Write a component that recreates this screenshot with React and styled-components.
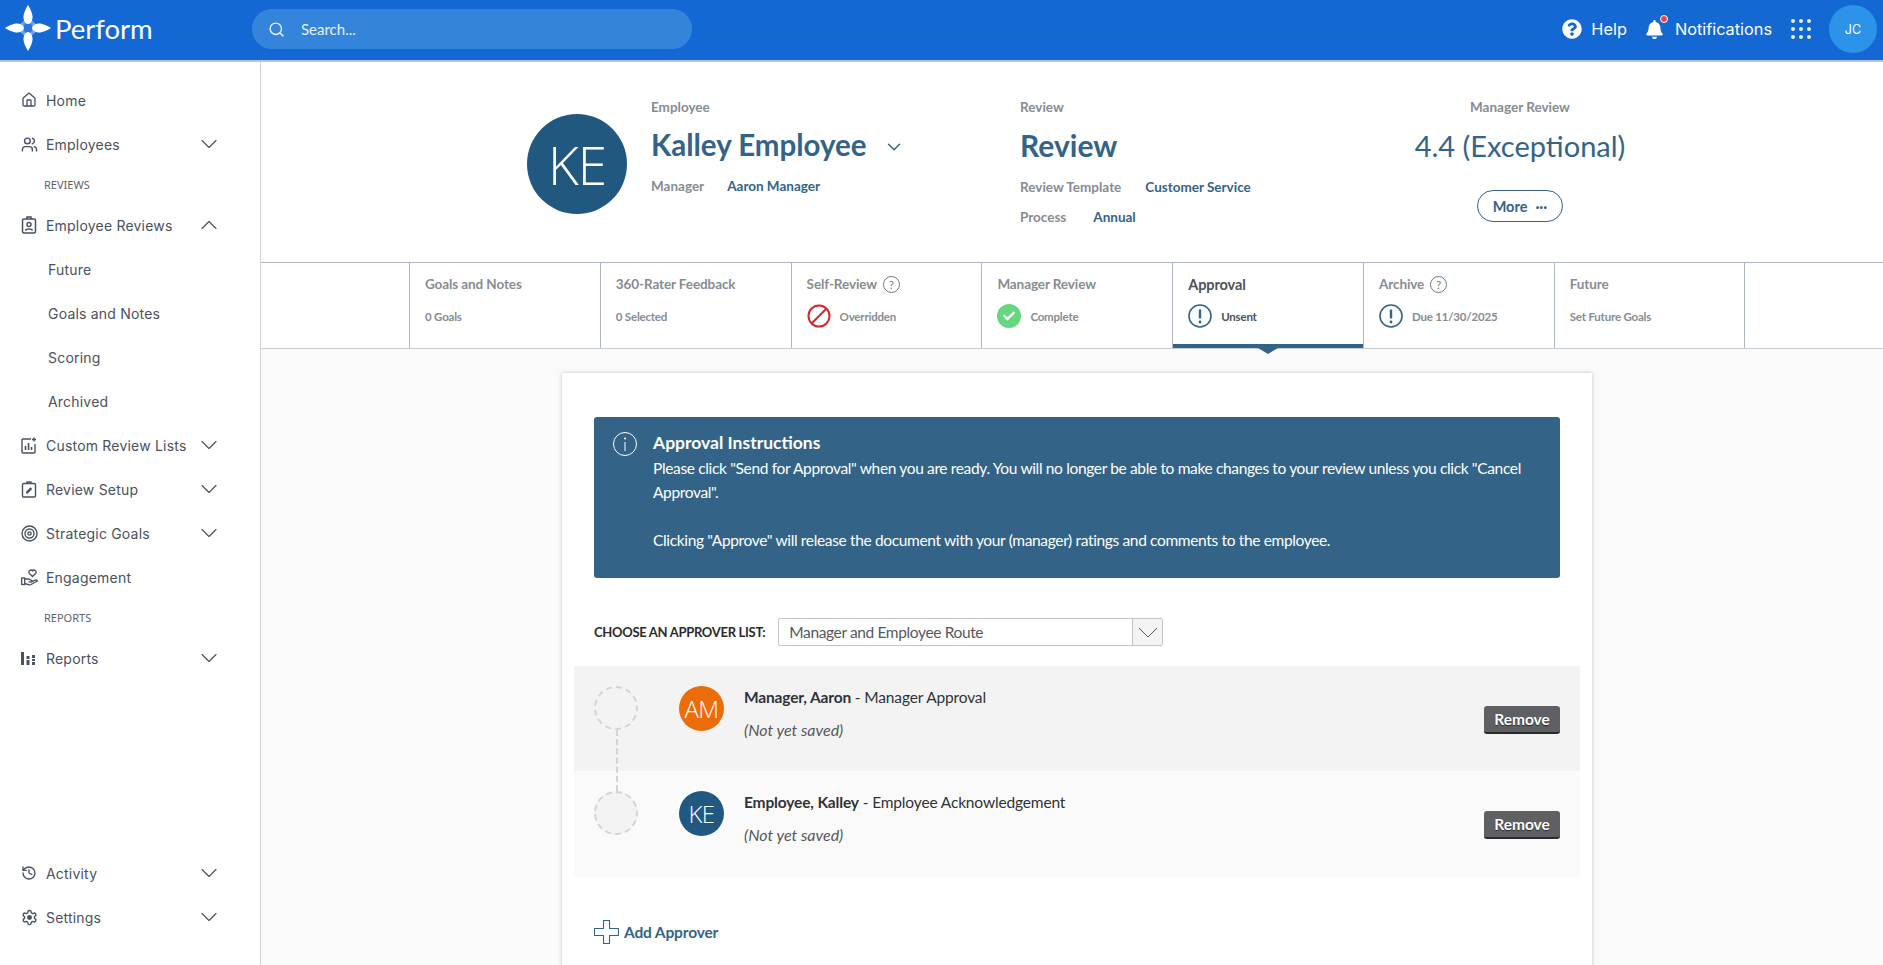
import React from "react";
import styled, { createGlobalStyle } from "styled-components";
import { LuHouse, LuUsers, LuChevronDown, LuChevronUp, LuSearch, LuHistory } from "react-icons/lu";
import { FaQuestionCircle, FaBell, FaCheck } from "react-icons/fa";

const BLUE = "#336488";
const BODY = '"Lato", "Liberation Sans", sans-serif';
const NAV = '"Inter", "Liberation Sans", sans-serif';

const GlobalStyle = createGlobalStyle`
  html, body { margin: 0; padding: 0; height: 100%; overflow: hidden; }
  body { font-family: ${BODY}; background: #fff; }
  #root { height: 100%; }
  * { box-sizing: border-box; }
`;

const Page = styled.div`
  height: 965px;
  display: flex;
  flex-direction: column;
  overflow: hidden;
`;

/* top bar */
const TopBar = styled.header`
  flex: 0 0 62px;
  background: #1368d4;
  border-bottom: 2px solid #b8c4d6;
  display: flex;
  align-items: center;
  padding: 0 6px 2px 5px;
`;

const Brand = styled.div`
  width: 247px;
  display: flex;
  align-items: center;
  gap: 4px;
  color: #fff;
  font-family: "Lato", sans-serif;
  font-size: 27.5px;
  font-weight: 400;
  padding-bottom: 2px;
`;

const SearchBox = styled.div`
  width: 440px;
  height: 40px;
  border-radius: 20px;
  background: #3484dc;
  display: flex;
  align-items: center;
  gap: 16px;
  padding: 0 16px;
  color: #e8f1fb;
  font-size: 15px;
`;

const TopRight = styled.div`
  margin-left: auto;
  display: flex;
  align-items: center;
  color: #fff;
  font-family: ${NAV};
  font-size: 16.3px;
`;

const TopLink = styled.div`
  display: flex;
  align-items: center;
  gap: ${(p) => p.$gap}px;
  margin-right: ${(p) => p.$right}px;
`;

const BellWrap = styled.span`
  position: relative;
  display: flex;
`;

const BellDot = styled.span`
  position: absolute;
  top: -5px;
  right: -4px;
  width: 6px;
  height: 6px;
  border-radius: 50%;
  background: #e8424f;
  border: 1px solid #fff;
  box-sizing: content-box;
`;

const AppsGrid = styled.div`
  display: grid;
  grid-template-columns: repeat(3, 4px);
  gap: 4px;
  margin-right: 18px;
`;

const AppsDot = styled.span`
  width: 4px;
  height: 4px;
  border-radius: 50%;
  background: #e6effa;
`;

const UserBubble = styled.div`
  width: 48px;
  height: 48px;
  border-radius: 50%;
  background: #2b93e8;
  display: flex;
  align-items: center;
  justify-content: center;
  font-size: 12.5px;
`;

const Body = styled.div`
  flex: 1;
  min-height: 0;
  display: flex;
`;

/* sidebar */
const Sidebar = styled.nav`
  flex: 0 0 261px;
  border-right: 1px solid #cfd3d8;
  padding-top: 16px;
  padding-bottom: 26px;
  display: flex;
  flex-direction: column;
`;

const NavRow = styled.div`
  height: 44px;
  display: flex;
  align-items: center;
  padding: 0 37px 0 ${(p) => (p.$sub ? 48 : 21)}px;
  color: #4a5160;
  font-family: ${NAV};
  font-size: 14px;
  letter-spacing: 0.2px;
`;

const NavIcon = styled.span`
  width: 25px;
  display: flex;
  color: #4a5160;
`;

const NavChevron = styled.span`
  margin-left: auto;
  display: flex;
`;

const NavHeading = styled.div`
  height: 37px;
  display: flex;
  align-items: center;
  padding-left: 44px;
  font-size: 11px;
  color: #5b616c;
  font-family: "Noto Sans", sans-serif;
`;

const NavBottom = styled.div`
  margin-top: auto;
`;

/* main column */
const Main = styled.main`
  flex: 1;
  min-width: 0;
  background: #fafafa;
  display: flex;
  flex-direction: column;
`;

const Summary = styled.section`
  flex: 0 0 200px;
  background: #fff;
  display: flex;
  padding: 35px 0 0 266px;
`;

const BigAvatar = styled.div`
  flex: 0 0 100px;
  height: 100px;
  margin: 17px 24px 0 0;
  border-radius: 50%;
  background: #20587f;
  color: #fff;
  display: flex;
  align-items: center;
  justify-content: center;
  font-family: "Open Sans", sans-serif;
  font-weight: 300;
  font-size: 53px;
  letter-spacing: -1px;
`;

const SummaryCol = styled.div`
  width: ${(p) => p.$width}px;
  display: flex;
  flex-direction: column;
  align-items: ${(p) => (p.$center ? "center" : "flex-start")};
`;

const MutedLabel = styled.div`
  height: 20px;
  line-height: 20px;
  color: #868c94;
  font-size: 13.5px;
  font-weight: 700;
`;

const Heading = styled.div`
  display: flex;
  align-items: center;
  gap: 16px;
  height: 54px;
  padding-top: ${(p) => p.$drop || 0}px;
  color: ${BLUE};
  font-size: ${(p) => p.$size}px;
  font-weight: 700;
`;

const HeadingChevron = styled.span`
  display: flex;
  margin-top: 5px;
`;

const KeyRow = styled.div`
  display: flex;
  gap: ${(p) => p.$gap}px;
  height: 30px;
  align-items: center;
  font-size: 13.5px;
  font-weight: 700;
  margin-top: ${(p) => p.$top || 0}px;
`;

const KeyName = styled.span`
  color: #868c94;
`;

const KeyValue = styled.span`
  color: ${BLUE};
`;

const Score = styled.div`
  height: 54px;
  padding-top: 3px;
  display: flex;
  align-items: center;
  color: ${BLUE};
  font-size: 29px;
  white-space: nowrap;
`;

const MoreButton = styled.div`
  width: 86px;
  height: 32px;
  margin-top: 19px;
  border: 1px solid ${BLUE};
  border-radius: 16px;
  color: ${BLUE};
  display: flex;
  align-items: center;
  justify-content: center;
  gap: 8px;
  font-size: 14.5px;
  font-weight: 700;
`;

/* stepper tabs */
const TabBar = styled.div`
  flex: 0 0 87px;
  background: #fff;
  border-top: 1px solid #aeb6bf;
  border-bottom: 1px solid #c9cdd2;
  display: flex;
  padding-left: 148px;
`;

const Tab = styled.div`
  position: relative;
  width: 190.8px;
  border-left: 1px solid #aeb6bf;
  border-right: ${(p) => (p.$last ? "1px solid #aeb6bf" : "none")};
  padding: 10px 0 0 15px;
  ${(p) => p.$active && `box-shadow: inset 0 -4px 0 ${BLUE};`}
`;

const TabTitle = styled.div`
  display: flex;
  align-items: center;
  gap: 6px;
  height: 22px;
  color: ${(p) => (p.$active ? "#4c5258" : "#868c94")};
  font-size: ${(p) => (p.$active ? 14.5 : 13.5)}px;
  font-weight: 700;
  letter-spacing: -0.1px;
`;

const TabStatus = styled.div`
  display: flex;
  align-items: center;
  gap: 9px;
  height: 26px;
  margin-top: 8px;
  color: ${(p) => (p.$active ? "#4c5258" : "#868c94")};
  font-size: 11.5px;
  font-weight: 700;
  letter-spacing: -0.2px;
`;

const TabArrow = styled.span`
  position: absolute;
  left: 85px;
  bottom: -6px;
  border-left: 10px solid transparent;
  border-right: 10px solid transparent;
  border-top: 6px solid ${BLUE};
  z-index: 1;
`;

const Help = styled.span`
  width: 17px;
  height: 17px;
  border: 1px solid #6f757c;
  border-radius: 50%;
  color: #6f757c;
  font-size: 11px;
  font-weight: 400;
  display: flex;
  align-items: center;
  justify-content: center;
`;

const DoneBadge = styled.span`
  width: 24px;
  height: 24px;
  border-radius: 50%;
  background: #66d67f;
  color: #fff;
  display: flex;
  align-items: center;
  justify-content: center;
`;

/* card */
const Content = styled.div`
  flex: 1;
  min-height: 0;
  padding: 24px 0 0 301px;
  overflow: hidden;
`;

const Card = styled.div`
  width: 1030px;
  height: 700px;
  background: #fff;
  box-shadow: 0 0 4px rgba(0, 0, 0, 0.22);
  padding: 44px 12px 0;
`;

const Banner = styled.div`
  margin: 0 20px;
  height: 161px;
  background: ${BLUE};
  border-radius: 3px;
  color: #fff;
  display: flex;
  padding: 14px 30px 0 19px;
  gap: 16px;
  font-size: 15.5px;
  line-height: 24px;
  letter-spacing: -0.35px;
`;

const BannerIcon = styled.span`
  flex: 0 0 24px;
  margin-top: 1px;
`;

const BannerTitle = styled.div`
  font-size: 17.5px;
  font-weight: 700;
  line-height: 24px;
  letter-spacing: 0;
`;

const BannerText = styled.p`
  margin: 1px 0 0;
  white-space: pre-line;
`;

const ListPicker = styled.div`
  margin: 40px 20px 20px;
  display: flex;
  align-items: center;
  gap: 13px;
  color: #2b2b2b;
  font-size: 13px;
  font-weight: 700;
  letter-spacing: -0.3px;
`;

const Select = styled.div`
  width: 385px;
  height: 28px;
  border: 1px solid #c4c4c4;
  border-radius: 2px;
  display: flex;
  align-items: center;
  padding-left: 10px;
  color: #55585c;
  font-size: 15.5px;
  font-weight: 400;
  letter-spacing: -0.37px;
`;

const SelectArrow = styled.span`
  margin-left: auto;
  width: 30px;
  height: 26px;
  background: #f4f4f4;
  border-left: 1px solid #c4c4c4;
  display: flex;
  align-items: center;
  justify-content: center;
  color: #4a4a4a;
`;

const ApproverRow = styled.div`
  position: relative;
  height: ${(p) => (p.$last ? 106 : 105)}px;
  background: ${(p) => (p.$last ? "#fafafa" : "#f3f3f3")};
  display: flex;
  padding: 20px 20px 0;
`;

const StepCircle = styled.span`
  flex: 0 0 44px;
  height: 44px;
  border: 2px dashed #d4d4d4;
  border-radius: 50%;
  background: ${(p) => (p.$filled ? "#f3f3f3" : "transparent")};
`;

const StepLine = styled.span`
  position: absolute;
  left: 42px;
  top: 64px;
  height: 61px;
  border-left: 2px dashed #d4d4d4;
  z-index: 1;
`;

const RowAvatar = styled.div`
  flex: 0 0 45px;
  height: 45px;
  margin: 0 20px 0 41px;
  border-radius: 50%;
  background: ${(p) => p.$bg};
  color: #fff;
  display: flex;
  align-items: center;
  justify-content: center;
  font-family: "Open Sans", sans-serif;
  font-size: 24px;
  font-weight: 300;
  letter-spacing: -0.5px;
`;

const RowText = styled.div`
  flex: 1;
  margin-top: -1px;
  color: #2f3338;
  font-size: 15.5px;
`;

const RowName = styled.div`
  height: 24px;
  line-height: 24px;
  letter-spacing: -0.15px;
`;

const RowNote = styled.div`
  margin-top: 9px;
  height: 24px;
  line-height: 24px;
  font-style: italic;
  color: #55585c;
  font-size: 16px;
`;

const RemoveButton = styled.div`
  width: 76px;
  height: 28px;
  margin-top: 20px;
  background: #5f6064;
  border-bottom: 2px solid #2b2b2b;
  border-radius: 3px;
  color: #fff;
  display: flex;
  align-items: center;
  justify-content: center;
  font-size: 15.5px;
  font-weight: 700;
  text-shadow: 0 1px 1px rgba(0, 0, 0, 0.6);
`;

const AddApprover = styled.div`
  margin: 43px 20px 0;
  display: flex;
  align-items: center;
  gap: 5px;
  color: ${BLUE};
  font-size: 15.5px;
  font-weight: 700;
  letter-spacing: -0.15px;
`;

const Logo = () => (
  <svg width="46" height="46" viewBox="0 0 46 46">
    <path d="M23 8 Q27 19 38 23 Q27 27 23 38 Q19 27 8 23 Q19 19 23 8 Z" fill="#6ba3ea" />
    <path d="M23 16 L30 23 L23 30 L16 23 Z" fill="#2a78d8" />
    <g fill="#fff">
      <path d="M23 0 C25 3 28 9 27.500 13 C27 17 25 19 23 19 C21 19 19 17 18.500 13 C18 9 21 3 23 0 Z" />
      <path d="M23 46 C25 43 28 37 27.500 33 C27 29 25 27 23 27 C21 27 19 29 18.500 33 C18 37 21 43 23 46 Z" />
      <path d="M0 23 C3 21 9 18 13 18.500 C17 19 19 21 19 23 C19 25 17 27 13 27.500 C9 28 3 25 0 23 Z" />
      <path d="M46 23 C43 21 37 18 33 18.500 C29 19 27 21 27 23 C27 25 29 27 33 27.500 C37 28 43 25 46 23 Z" />
    </g>
  </svg>
);

const BadgeIcon = () => (
  <svg width="16" height="18" viewBox="0 0 16 18" fill="none" stroke="currentColor" strokeWidth="1.5">
    <rect x="1.5" y="3" width="13" height="14" rx="1.5" />
    <path d="M6 3V1h4v2" />
    <circle cx="8" cy="8.5" r="2" />
    <path d="M4.500 14.500c.5-2 6.500-2 7 0" />
  </svg>
);

const ChartPlusIcon = () => (
  <svg width="16" height="17" viewBox="0 0 16 17" fill="none" stroke="currentColor" strokeWidth="1.4">
    <path d="M10 2H2a1 1 0 0 0-1 1v12a1 1 0 0 0 1 1h11a1 1 0 0 0 1-1V7" />
    <path d="M4.500 13V9M7.500 13V6M10.500 13v-3" strokeWidth="1.6" />
    <path d="M13 0.500v4M11 2.500h4" />
  </svg>
);

const ClipboardEditIcon = () => (
  <svg width="16" height="17" viewBox="0 0 16 17" fill="none" stroke="currentColor" strokeWidth="1.4">
    <rect x="1.5" y="2.500" width="13" height="13.500" rx="1.2" />
    <path d="M6 2.500V1h4v1.500" />
    <path d="M5 12.500v-1.700l4.500-4.500 1.700 1.700-4.500 4.500Z" fill="currentColor" stroke="none" />
  </svg>
);

const TargetIcon = () => (
  <svg width="17" height="17" viewBox="0 0 17 17" fill="none" stroke="currentColor" strokeWidth="1.4">
    <circle cx="8.500" cy="8.500" r="7.500" />
    <circle cx="8.500" cy="8.500" r="4.500" />
    <circle cx="8.500" cy="8.500" r="1.600" />
  </svg>
);

const HandHeartIcon = () => (
  <svg width="18" height="17" viewBox="0 0 18 17" fill="none" stroke="currentColor" strokeWidth="1.3">
    <path d="M11.500 7.500 8.400 4.500C7.200 3.200 8.200 1 10 1c.7 0 1.200.3 1.500.8.300-.5.800-.8 1.500-.8 1.800 0 2.800 2.200 1.600 3.500Z" />
    <rect x="0.700" y="9" width="3" height="6.500" />
    <path d="M3.700 10h3.800l3 1.400c1 .5.600 1.900-.6 1.700l-2.400-.4" />
    <path d="M3.700 14.500l4.600 1.300c.6.100 1.200 0 1.700-.3l6.500-3.500c-.3-1-1.300-1.300-2.200-.9l-3.300 1.500" />
  </svg>
);

const GearIcon = () => (
  <svg width="17" height="17" viewBox="0 0 24 24" fill="none" stroke="currentColor" strokeWidth="2">
    <path d="M12.220 2h-.44a2 2 0 0 0-2 2v.18a2 2 0 0 1-1 1.730l-.43.25a2 2 0 0 1-2 0l-.15-.08a2 2 0 0 0-2.730.73l-.22.38a2 2 0 0 0 .73 2.730l.15.1a2 2 0 0 1 1 1.720v.51a2 2 0 0 1-1 1.740l-.15.09a2 2 0 0 0-.73 2.730l.22.38a2 2 0 0 0 2.730.73l.15-.08a2 2 0 0 1 2 0l.43.25a2 2 0 0 1 1 1.730V20a2 2 0 0 0 2 2h.44a2 2 0 0 0 2-2v-.18a2 2 0 0 1 1-1.730l.43-.25a2 2 0 0 1 2 0l.15.08a2 2 0 0 0 2.730-.73l.22-.39a2 2 0 0 0-.73-2.730l-.15-.08a2 2 0 0 1-1-1.740v-.5a2 2 0 0 1 1-1.740l.15-.09a2 2 0 0 0 .73-2.730l-.22-.38a2 2 0 0 0-2.730-.73l-.15.08a2 2 0 0 1-2 0l-.43-.25a2 2 0 0 1-1-1.730V4a2 2 0 0 0-2-2z" />
    <circle cx="12" cy="12" r="3.500" fill="currentColor" stroke="none" />
  </svg>
);

const BarsIcon = () => (
  <svg width="14" height="13" viewBox="0 0 14 13" fill="currentColor">
    <rect x="0" y="0" width="3" height="13" />
    <rect x="5.500" y="4" width="3" height="3" />
    <rect x="5.500" y="8" width="3" height="5" />
    <rect x="11" y="3" width="3" height="3" />
    <rect x="11" y="7" width="3" height="2" />
    <rect x="11" y="10" width="3" height="3" />
  </svg>
);

const OverriddenIcon = () => (
  <svg width="24" height="24" viewBox="0 0 24 24" fill="none" stroke="#d8242a" strokeWidth="2">
    <circle cx="12" cy="12" r="10.500" />
    <path d="M19 5 5 19" />
  </svg>
);

const AlertIcon = () => (
  <svg width="24" height="24" viewBox="0 0 24 24" fill="none" stroke={BLUE} strokeWidth="1.600">
    <circle cx="12" cy="12" r="11" />
    <path d="M12 5.500v9" strokeWidth="2.400" />
    <circle cx="12" cy="18" r="1.400" fill={BLUE} stroke="none" />
  </svg>
);

const InfoIcon = () => (
  <svg width="24" height="24" viewBox="0 0 24 24" fill="none" stroke="#fff" strokeWidth="1">
    <circle cx="12" cy="12" r="11.500" />
    <path d="M12 10v9" />
    <circle cx="12" cy="6.500" r="1" fill="#fff" stroke="none" />
  </svg>
);

const SelectChevron = () => (
  <svg width="20" height="11" viewBox="0 0 20 11" fill="none" stroke="currentColor" strokeWidth="0.9">
    <path d="M1 1l9 9 9-9" />
  </svg>
);

const CrossIcon = () => (
  <svg width="25" height="24" viewBox="0 0 25 24" fill="none" stroke={BLUE} strokeWidth="1.100" strokeLinejoin="round">
    <path d="M9.500 .5h6v8h9v7h-9v8h-6v-8h-9v-7h9z" />
  </svg>
);

const navMain = [
  { label: "Home", icon: <LuHouse size={16} /> },
  { label: "Employees", icon: <LuUsers size={17} />, open: false },
  { heading: "REVIEWS" },
  { label: "Employee Reviews", icon: <BadgeIcon />, open: true },
  { label: "Future", sub: true },
  { label: "Goals and Notes", sub: true },
  { label: "Scoring", sub: true },
  { label: "Archived", sub: true },
  { label: "Custom Review Lists", icon: <ChartPlusIcon />, open: false },
  { label: "Review Setup", icon: <ClipboardEditIcon />, open: false },
  { label: "Strategic Goals", icon: <TargetIcon />, open: false },
  { label: "Engagement", icon: <HandHeartIcon /> },
  { heading: "REPORTS" },
  { label: "Reports", icon: <BarsIcon />, open: false },
];

const navBottom = [
  { label: "Activity", icon: <LuHistory size={16} />, open: false },
  { label: "Settings", icon: <GearIcon />, open: false },
];

const NavItem = ({ item }) => {
  if (item.heading) return <NavHeading>{item.heading}</NavHeading>;
  return (
    <NavRow $sub={item.sub}>
      {item.icon && <NavIcon>{item.icon}</NavIcon>}
      {item.label}
      {item.open !== undefined && (
        <NavChevron>
          {item.open ? <LuChevronUp size={28} strokeWidth={1} /> : <LuChevronDown size={28} strokeWidth={1} />}
        </NavChevron>
      )}
    </NavRow>
  );
};

const tabs = [
  { title: "Goals and Notes", status: "0 Goals" },
  { title: "360-Rater Feedback", status: "0 Selected" },
  { title: "Self-Review", help: true, status: "Overridden", icon: <OverriddenIcon /> },
  {
    title: "Manager Review",
    status: "Complete",
    icon: (
      <DoneBadge>
        <FaCheck size={12} />
      </DoneBadge>
    ),
  },
  { title: "Approval", status: "Unsent", icon: <AlertIcon />, active: true },
  { title: "Archive", help: true, status: "Due 11/30/2025", icon: <AlertIcon /> },
  { title: "Future", status: "Set Future Goals" },
];

const approvers = [
  { initials: "AM", bg: "#ea6d0a", name: "Manager, Aaron", role: "Manager Approval" },
  { initials: "KE", bg: "#20587f", name: "Employee, Kalley", role: "Employee Acknowledgement", last: true },
];

export default function App() {
  return (
    <Page>
      <GlobalStyle />
      <TopBar>
        <Brand>
          <Logo />
          Perform
        </Brand>
        <SearchBox>
          <LuSearch size={17} />
          Search...
        </SearchBox>
        <TopRight>
          <TopLink $gap={9} $right={18}>
            <FaQuestionCircle size={20} />
            Help
          </TopLink>
          <TopLink $gap={11} $right={19}>
            <BellWrap>
              <FaBell size={19} />
              <BellDot />
            </BellWrap>
            Notifications
          </TopLink>
          <AppsGrid>
            {Array.from({ length: 9 }).map((_, i) => (
              <AppsDot key={i} />
            ))}
          </AppsGrid>
          <UserBubble>JC</UserBubble>
        </TopRight>
      </TopBar>
      <Body>
        <Sidebar>
          {navMain.map((item) => (
            <NavItem key={item.label || item.heading} item={item} />
          ))}
          <NavBottom>
            {navBottom.map((item) => (
              <NavItem key={item.label} item={item} />
            ))}
          </NavBottom>
        </Sidebar>
        <Main>
          <Summary>
            <BigAvatar>KE</BigAvatar>
            <SummaryCol $width={369}>
              <MutedLabel>Employee</MutedLabel>
              <Heading $size={29.5}>
                Kalley Employee
                <HeadingChevron>
                  <LuChevronDown size={22} strokeWidth={1.6} />
                </HeadingChevron>
              </Heading>
              <KeyRow $gap={23}>
                <KeyName>Manager</KeyName>
                <KeyValue>Aaron Manager</KeyValue>
              </KeyRow>
            </SummaryCol>
            <SummaryCol $width={393}>
              <MutedLabel>Review</MutedLabel>
              <Heading $size={30} $drop={2}>
                Review
              </Heading>
              <KeyRow $gap={24} $top={1}>
                <KeyName>Review Template</KeyName>
                <KeyValue>Customer Service</KeyValue>
              </KeyRow>
              <KeyRow $gap={27}>
                <KeyName>Process</KeyName>
                <KeyValue>Annual</KeyValue>
              </KeyRow>
            </SummaryCol>
            <SummaryCol $width={214} $center>
              <MutedLabel>Manager Review</MutedLabel>
              <Score>4.4 (Exceptional)</Score>
              <MoreButton>
                More <span>···</span>
              </MoreButton>
            </SummaryCol>
          </Summary>
          <TabBar>
            {tabs.map((t, i) => (
              <Tab key={t.title} $active={t.active} $last={i === tabs.length - 1}>
                <TabTitle $active={t.active}>
                  {t.title}
                  {t.help && <Help>?</Help>}
                </TabTitle>
                <TabStatus $active={t.active}>
                  {t.icon}
                  {t.status}
                </TabStatus>
                {t.active && <TabArrow />}
              </Tab>
            ))}
          </TabBar>
          <Content>
            <Card>
              <Banner>
                <BannerIcon>
                  <InfoIcon />
                </BannerIcon>
                <div>
                  <BannerTitle>Approval Instructions</BannerTitle>
                  <BannerText>
                    {'Please click "Send for Approval" when you are ready. You will no longer be able to make changes to your review unless you click "Cancel Approval".\n\nClicking "Approve" will release the document with your (manager) ratings and comments to the employee.'}
                  </BannerText>
                </div>
              </Banner>
              <ListPicker>
                CHOOSE AN APPROVER LIST:
                <Select>
                  Manager and Employee Route
                  <SelectArrow>
                    <SelectChevron />
                  </SelectArrow>
                </Select>
              </ListPicker>
              {approvers.map((a) => (
                <ApproverRow key={a.initials} $last={a.last}>
                  <StepCircle $filled={a.last} />
                  {!a.last && <StepLine />}
                  <RowAvatar $bg={a.bg}>{a.initials}</RowAvatar>
                  <RowText>
                    <RowName>
                      <b>{a.name}</b> - {a.role}
                    </RowName>
                    <RowNote>(Not yet saved)</RowNote>
                  </RowText>
                  <RemoveButton>Remove</RemoveButton>
                </ApproverRow>
              ))}
              <AddApprover>
                <CrossIcon />
                Add Approver
              </AddApprover>
            </Card>
          </Content>
        </Main>
      </Body>
    </Page>
  );
}
